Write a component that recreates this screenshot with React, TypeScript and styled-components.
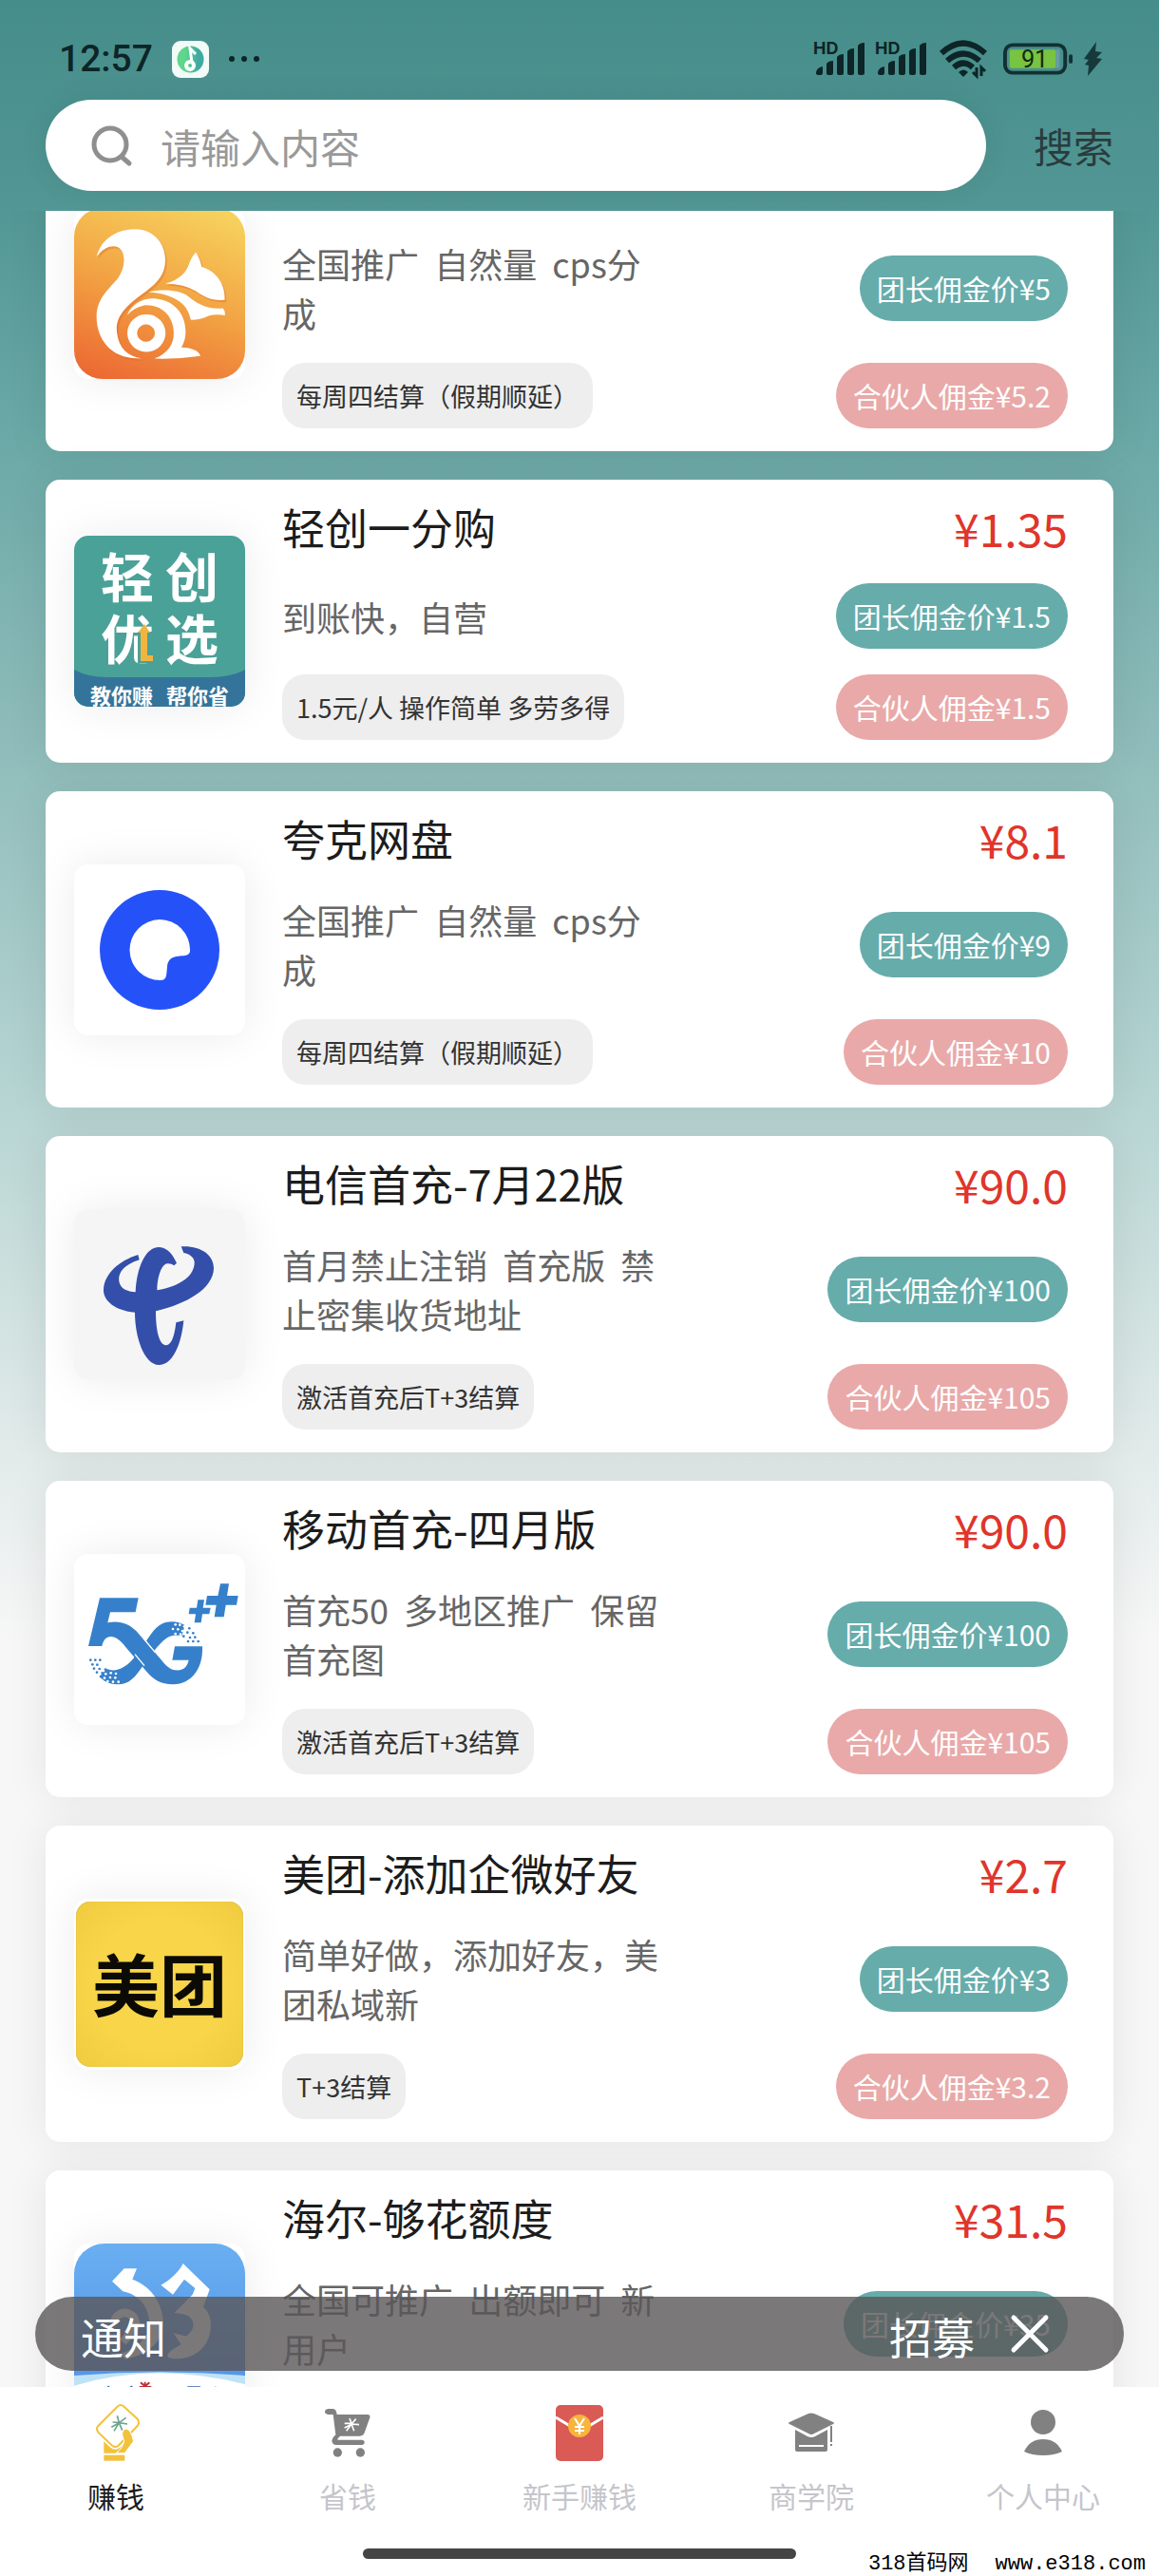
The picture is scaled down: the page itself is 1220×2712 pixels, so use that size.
import React, { useLayoutEffect, useRef, useState } from 'react';
import styled, { createGlobalStyle } from 'styled-components';

const sans = '"Noto Sans CJK SC", "Noto Sans", sans-serif';

const GlobalStyle = createGlobalStyle`
  *, *::before, *::after { box-sizing: border-box; }
  body { margin: 0; font-family: ${sans}; color: #1c1c1c; background: #f7f7f7; }
  button, input { font: inherit; color: inherit; border: 0; padding: 0; margin: 0; background: none; }
  h2, p, ul { margin: 0; padding: 0; font-weight: 400; }
  ul { list-style: none; }
  svg { display: block; flex: none; overflow: visible; }
`;

/* ---------- shell ---------- */

const Screen = styled.div`
  position: relative;
  display: flex;
  flex-direction: column;
  height: 100vh;
  background: linear-gradient(
    180deg,
    #458d8a 0,
    #519694 200px,
    #69a8a6 450px,
    #8dbbb9 765px,
    #b5d4d2 1150px,
    #e2ebea 1530px,
    #f7f7f7 1730px
  );
`;

const StatusBar = styled.div`
  display: flex;
  align-items: center;
  justify-content: space-between;
  height: 105px;
  padding: 19px 60px 0 62px;
  color: #0d2527;
`;

const StatusGroup = styled.div<{ $gap: number }>`
  display: flex;
  align-items: center;
  gap: ${(p) => p.$gap}px;
`;

const Clock = styled.span`
  font: 500 39px/48px Roboto, sans-serif;
`;

const SearchRow = styled.form`
  display: flex;
  align-items: center;
  gap: 50px;
  padding: 0 48px 21px;
`;

const SearchBox = styled.label`
  display: flex;
  align-items: center;
  gap: 30px;
  flex: 1;
  height: 96px;
  padding: 0 48px;
  border-radius: 48px;
  background: #fff;
  color: #8f8f8f;
  box-shadow: 0 0 30px rgba(0, 0, 0, 0.08);
`;

const SearchInput = styled.input`
  flex: 1;
  min-width: 0;
  height: 60px;
  font-size: 42px;
  outline: none;
  color: #333;
  &::placeholder { color: #999; opacity: 1; }
`;

const SearchButton = styled.button`
  font-size: 42px;
  line-height: 60px;
  color: #2b3c3c;
`;

/* ---------- offers ---------- */

const OfferList = styled.ul`
  display: flex;
  flex-direction: column;
  gap: 30px;
  flex: 1;
  min-height: 0;
  padding: 0 48px;
  overflow-y: auto;
  scrollbar-width: none;
`;

const Card = styled.li`
  display: flex;
  align-items: center;
  flex: none;
  gap: 39px;
  padding: 24px 48px 24px 30px;
  border-radius: 15px;
  background: #fff;
  box-shadow: 0 0 45px rgba(0, 0, 0, 0.08);
`;

const LogoTile = styled.div<{ $bg: string; $radius?: number }>`
  position: relative;
  flex: none;
  width: 180px;
  height: 180px;
  overflow: hidden;
  border-radius: ${(p) => p.$radius ?? 15}px;
  background: ${(p) => p.$bg};
`;

const LogoShadow = styled.div`
  flex: none;
  border-radius: 15px;
  box-shadow: 0 0 45px rgba(0, 0, 0, 0.08);
`;

const CardBody = styled.div`
  display: flex;
  flex-direction: column;
  gap: 27px;
  flex: 1;
  min-width: 0;
`;

const CardRow = styled.div`
  display: flex;
  align-items: center;
  justify-content: space-between;
  min-height: 69px;
`;

const HeadRow = styled.div`
  display: flex;
  align-items: flex-start;
  justify-content: space-between;
  height: 58px;
`;

const Title = styled.h2`
  font-size: 45px;
  line-height: 52px;
`;

const Price = styled.span`
  font-size: 48px;
  line-height: 52px;
  color: #e0352b;
`;

const Desc = styled.p`
  width: 400px;
  font-size: 36px;
  line-height: 52px;
  color: #666;
  white-space: pre-wrap;
`;

const Tag = styled.span`
  padding: 0 15px;
  border-radius: 24px;
  font-size: 27px;
  line-height: 69px;
  color: #333;
  background: #eee;
`;

const Pill = styled.span<{ $tone: 'leader' | 'partner' }>`
  padding: 0 18px;
  border-radius: 35px;
  font-size: 30px;
  line-height: 69px;
  color: #fff;
  white-space: nowrap;
  background: ${(p) => (p.$tone === 'leader' ? '#66acab' : '#e9a9a9')};
`;

const LogoGrid = styled.div`
  display: grid;
  grid-template-columns: 56px 56px;
  column-gap: 12px;
  row-gap: 8px;
  justify-content: center;
  padding-top: 12px;
  font-size: 56px;
  font-weight: 700;
  line-height: 57px;
  color: #fff;
`;

const ArchBack = styled.svg`
  position: absolute;
  inset: 0;
`;

const LogoStrap = styled.div`
  position: absolute;
  left: 0;
  right: 0;
  bottom: 0;
  display: flex;
  justify-content: center;
  gap: 14px;
  font-size: 22px;
  font-weight: 700;
  line-height: 26px;
  color: #fff;
`;

const MeituanMark = styled.div`
  margin: 3px 2px;
  height: 174px;
  border-radius: 15px;
  background: radial-gradient(circle, #f8d549 55%, #f0cb3f 100%);
  box-shadow: inset 0 0 1px #b0962f;
  text-align: center;
  font-size: 71px;
  font-weight: 700;
  line-height: 168px;
  color: #0b0a05;
`;

/* ---------- notice bar and tabs ---------- */

const Notice = styled.div`
  position: absolute;
  left: 37px;
  right: 37px;
  bottom: 216px;
  display: flex;
  align-items: center;
  height: 78px;
  padding: 0 79px 0 48px;
  border-radius: 39px;
  background: rgba(90, 86, 87, 0.8);
  color: #fff;
  font-size: 45px;
  line-height: 66px;
`;

const NoticeLabel = styled.span`
  padding-top: 6px;
`;

const NoticeAction = styled.a`
  margin-left: auto;
  padding-top: 6px;
  color: inherit;
  text-decoration: none;
`;

const CloseButton = styled.button`
  display: flex;
  margin-left: 38px;
`;

const TabBar = styled.nav`
  display: flex;
  flex: none;
  padding-top: 18px;
  background: #fff;
`;

const Tab = styled.button<{ $active: boolean }>`
  display: flex;
  flex-direction: column;
  align-items: center;
  gap: 14px;
  flex: 1;
  font-size: 30px;
  line-height: 44px;
  color: ${(p) => (p.$active ? '#1c1c1c' : '#c5c5cb')};
`;

const HomeArea = styled.div`
  display: flex;
  justify-content: center;
  padding: 34px 0 18px;
  background: #fff;
`;

const HomeBar = styled.div`
  width: 456px;
  height: 11px;
  border-radius: 6px;
  background: #454545;
`;

const SiteMark = styled.div`
  position: absolute;
  right: 14px;
  bottom: 0;
  display: flex;
  align-items: baseline;
  gap: 28px;
  font: 22px/24px "Liberation Mono", monospace;
  color: #000;
`;

const SiteMarkName = styled.span`
  font-family: "Liberation Mono", "Noto Sans CJK SC", monospace;
`;

/* ---------- status icons ---------- */

const SignalIcon = () => (
  <svg width="55" height="38" viewBox="0 0 55 38" fill="currentColor">
    <text x="0" y="14" fontSize="18" fontWeight="700" fontFamily="Inter, sans-serif">HD</text>
    <path d="M3 33q1-5 7-6v6q0 3-2 3H5q-2 0-2-2zM14 24q2-3 7-3v13q0 2-2 2h-3q-2 0-2-2zM25 17q2-3 7-3v20q0 2-2 2h-3q-2 0-2-2zM36 11q2-3 7-3v26q0 2-2 2h-3q-2 0-2-2zM47 5q2-3 7-3v32q0 2-2 2h-3q-2 0-2-2z" />
  </svg>
);

const WifiIcon = () => (
  <svg width="60" height="38" viewBox="0 0 60 38" fill="none" stroke="currentColor" strokeWidth="6">
    <path d="M5 13Q28-8 51 13M11 21Q28 6 45 21M18 28Q28 19 38 28" />
    <path d="M23 33q5-5 10 0l-5 5z" fill="currentColor" stroke="none" />
    <path d="M42 28v9l-4-4M47 37v-9l4 4" strokeWidth="3" />
  </svg>
);

const BatteryIcon = () => (
  <svg width="74" height="36" viewBox="0 0 76 36">
    <rect x="2" y="3" width="65" height="30" rx="8" fill="none" stroke="#123033" strokeWidth="4" />
    <rect x="7" y="8" width="50" height="20" rx="2" fill="#78c341" />
    <rect x="57" y="8" width="4" height="20" fill="#6a9aa5" />
    <rect x="71" y="13" width="4" height="10" rx="2" fill="#123033" />
    <text x="34" y="27" textAnchor="middle" fontSize="26" fontFamily="Roboto, sans-serif" fill="#12290f">91</text>
  </svg>
);

const BoltIcon = () => (
  <svg width="20" height="36" viewBox="0 0 20 36" fill="#17393b">
    <path d="M14 0L1 18l5 1-4 5 4 1-1 11 15-18-6-1 6-6-7-1z" />
  </svg>
);

const NoteAppIcon = () => (
  <svg width="39" height="39" viewBox="0 0 39 39">
    <defs>
      <linearGradient id="note" x1="0" x2="1">
        <stop offset="0.3" stopColor="#5ed68c" />
        <stop offset="0.8" stopColor="#3fa9a2" />
      </linearGradient>
    </defs>
    <rect width="39" height="39" rx="9" fill="#f2fbf8" />
    <circle cx="19.500" cy="19.500" r="14" fill="url(#note)" />
    <circle cx="19" cy="26" r="4" fill="none" stroke="#fff" strokeWidth="4" />
    <path d="M21 23L19 8l6 6" fill="none" stroke="#fff" strokeWidth="3" />
  </svg>
);

const DotsIcon = () => (
  <svg width="34" height="8" viewBox="0 0 34 8" fill="currentColor">
    <circle cx="4" cy="4" r="3" />
    <circle cx="17" cy="4" r="3" />
    <circle cx="30" cy="4" r="3" />
  </svg>
);

const MagnifierIcon = () => (
  <svg width="43" height="43" viewBox="0 0 43 43" fill="none" stroke="currentColor" strokeWidth="5" strokeLinecap="round">
    <circle cx="20" cy="20" r="17" />
    <path d="M32 33l8 7" />
  </svg>
);

const CrossIcon = () => (
  <svg width="40" height="40" viewBox="0 0 40 40" stroke="currentColor" strokeWidth="5" strokeLinecap="round">
    <path d="M3 3l34 34M37 3L3 37" />
  </svg>
);

/* ---------- offer logos ---------- */

const SquirrelLogo = () => (
  <LogoTile $bg="linear-gradient(200deg, #f7d25d 5%, #f2a444 50%, #ec6632 98%)" $radius={30}>
    <svg width="180" height="180" viewBox="0 0 180 180">
      <g transform="scale(0.4464 0.3954) translate(-175 -47)" fill="#fff">
        <g fill="#d9652a" opacity="0.35" transform="translate(4 6)">
          <path d="M228 176C240 125 280 103 318 103C362 103 390 140 390 186C390 222 372 246 345 268C290 312 272 340 276 378C280 420 302 442 334 447C262 452 228 396 228 336C228 292 252 268 274 240C302 204 300 138 258 150Q242 156 228 176z" />
          <path d="M390 248C424 238 440 218 446 196Q452 176 462 165Q470 176 476 204C512 216 532 252 530 292C496 294 482 282 462 268Q436 250 390 248z" />
        </g>
        <path d="M228 176C240 125 280 103 318 103C362 103 390 140 390 186C390 222 372 246 345 268C290 312 272 340 276 378C280 420 302 442 334 447C262 452 228 396 228 336C228 292 252 268 274 240C302 204 300 138 258 150Q242 156 228 176z" />
        <path d="M390 248C424 238 440 218 446 196Q452 176 462 165Q470 176 476 204C512 216 532 252 530 292C496 294 482 282 462 268Q436 250 390 248z" />
        <path d="M350 270C390 262 424 266 444 282C464 300 488 318 526 314Q532 322 531 333Q510 328 492 334Q470 346 450 345C444 306 420 278 350 270z" />
        <path d="M300 332C312 300 340 286 364 288C412 292 438 330 438 376Q438 400 428 418Q468 420 473 441Q420 450 364 448C396 434 410 410 410 380C410 330 376 302 340 306Q316 312 300 332z" />
        <path fillRule="evenodd" d="M345 330a45 50 0 1 0 1 0zM345 357a21 23 0 1 1-1 0z" />
      </g>
    </svg>
  </LogoTile>
);

const QingchuangLogo = () => (
  <LogoTile $bg="#4aa198">
    <ArchBack width="180" height="180" viewBox="0 0 180 180">
      <path d="M0 141Q14 149 36 149H144Q166 149 180 141V180H0z" fill="#35749a" />
    </ArchBack>
    <LogoGrid>
      <span>轻</span>
      <span>创</span>
      <span>优</span>
      <span>选</span>
    </LogoGrid>
    <ArchBack width="180" height="180" viewBox="0 0 180 180">
      <path d="M67 101h17v33H67z" fill="#4aa198" />
      <path d="M74 93l6 9h-3v24h6v6H70v-30h-3z" fill="#f0b541" />
    </ArchBack>
    <LogoStrap>
      <span>教你赚</span>
      <span>帮你省</span>
    </LogoStrap>
  </LogoTile>
);

const QuarkLogo = () => (
  <LogoTile $bg="#fff">
    <svg width="180" height="180" viewBox="0 0 180 180">
      <circle cx="90" cy="90" r="63" fill="#2552f8" />
      <path d="M90 58A32 32 0 0 1 122 91Q122 95 117 96C106 97 99 97 98 108C97 116 98 122 91 122A32 32 0 0 1 90 58z" fill="#fff" />
    </svg>
  </LogoTile>
);

const TelecomLogo = () => (
  <LogoTile $bg="#f5f5f6">
    <svg width="180" height="180" viewBox="54 98 540 540" fill="#334faa">
      <path d="M256 242L260 258C212 274 192 298 196 326C200 350 222 358 248 360C252 280 280 218 322 218C352 220 366 244 378 268L370 276C362 270 352 268 343 271C326 280 316 320 316 354C390 342 436 308 434 264C432 250 420 240 400 236L392 216C450 212 496 240 495 286C492 350 410 396 312 420C312 480 322 526 344 528C364 528 372 490 376 456L400 450C392 530 364 590 322 590C274 588 246 500 246 424C184 418 146 388 147 352C150 300 198 260 256 242z" />
    </svg>
  </LogoTile>
);

const fiveGDots = [
  [106, 412], [121, 412], [136, 412], [112, 426], [127, 427], [117, 439], [134, 440], [153, 442], [126, 451],
  [143, 453], [138, 464], [362, 300], [418, 312], [430, 327], [412, 325], [436, 340], [420, 341], [446, 353],
  [430, 353], [414, 353], [400, 337],
];
const fiveGHoles = [
  [374, 300], [388, 301], [402, 306], [366, 314], [382, 315], [396, 320], [374, 329], [390, 331],
  [154, 456], [170, 453], [186, 455], [150, 469], [168, 467], [184, 468], [160, 479], [177, 481], [194, 481],
];

const FiveGLogo = () => (
  <LogoTile $bg="#fff">
    <svg width="180" height="180" viewBox="54 77 540 540" fill="#3680cb">
      <path d="M135 216H257L248 261H168L160 294C196 286 226 296 250 320L330 412C350 438 364 446 388 444Q410 440 416 412H364L372 369H459C462 440 424 488 368 489C330 490 304 474 284 450L216 370C196 344 178 334 160 340Q146 346 142 368H99z" />
      <path d="M250 396L274 426C246 470 226 490 190 489C168 488 148 480 134 464L158 440C178 450 214 446 250 396z" />
      <path d="M282 352C304 320 320 292 362 291Q386 292 404 302L394 336C362 328 344 336 306 384z" />
      <path d="M516 171h27l-6 38h35l-5 29h-34l-6 38h-30l6-38h-34l5-29h34zM445 222h20l-4 25h24l-4 20h-22l-4 27h-21l4-27h-22l3-20h22z" />
      {fiveGDots.map(([x, y]) => <circle key={`${x}-${y}`} cx={x} cy={y} r="4" />)}
      {fiveGHoles.map(([x, y]) => <circle key={`${x}-${y}`} cx={x} cy={y} r="4" fill="#fff" />)}
      <path d="M272 342L310 388M246 394L276 430" stroke="#fff" strokeWidth="4" />
    </svg>
  </LogoTile>
);

const MeituanLogo = () => (
  <LogoTile $bg="#fff">
    <MeituanMark>美团</MeituanMark>
  </LogoTile>
);

const HaierLogo = () => (
  <LogoTile $bg="linear-gradient(180deg, #6aaff1, #5597e8 70%)" $radius={32}>
    <svg width="180" height="180" viewBox="54 35 540 540">
      <path d="M54 452Q324 430 594 452V575H54z" fill="#bfe2f6" />
      <path d="M54 484Q180 446 324 444Q470 446 594 480V575H54z" fill="#fff" />
      <g fill="#fff">
        <path d="M174 154L212 114H252L238 148C290 166 332 216 336 282C336 340 296 384 216 400L200 384C262 362 292 326 292 282C286 226 254 196 208 186z" />
        <path d="M328 166C358 150 384 126 398 98L482 180L462 236C496 262 492 330 460 364C436 390 400 402 362 398C336 394 352 374 392 354L368 318L408 328C440 306 440 268 398 258L370 254L428 196L436 176L402 148L366 196z" />
      </g>
      <path d="M180 286a34 34 0 1 1 58 26l-30 34" fill="none" stroke="#fff" strokeWidth="26" />
      <path d="M160 486l18 14M228 492l10-6M344 491h48M412 489h38v10M462 491h22l6 10M500 487v12" fill="none" stroke="#3c5fae" strokeWidth="6" />
      <path d="M264 474l14 12 14-12M260 488h38M278 472v24" fill="none" stroke="#c02f38" strokeWidth="6" />
    </svg>
  </LogoTile>
);

/* ---------- tab icons ---------- */

const HandCardIcon = () => (
  <svg width="60" height="60" viewBox="96 543 180 180" fill="none">
    <path d="M148 650V698H214V690L240 660L230 626L192 680z" fill="#f2c23b" />
    <path d="M148 704H214V722H148z" fill="#f2c23b" />
    <path d="M192 550Q201 542 210 550L254 590Q262 602 254 612L194 674Q184 682 174 674L130 632Q122 620 130 612z" fill="#fff" stroke="#fff" strokeWidth="16" />
    <path d="M192 550Q201 542 210 550L254 590Q262 602 254 612L194 674Q184 682 174 674L130 632Q122 620 130 612z" stroke="#f2c23b" strokeWidth="6" />
    <path d="M206 640Q206 620 222 622Q232 624 242 660L214 698H186Q208 682 212 660z" fill="#f2c23b" stroke="#fff" strokeWidth="3" />
    <path d="M190 580L196 602L176 600M196 602L180 628M196 602L206 626M218 586L196 602L222 606M172 616L194 604" stroke="#6da58c" strokeWidth="5" />
  </svg>
);

const CartIcon = () => (
  <svg width="60" height="60" viewBox="828 543 180 180" fill="#818181">
    <path d="M856 558H872Q882 558 884 576H980Q990 576 988 586L970 636Q966 644 956 644H894Q886 650 886 656H962Q971 656 971 664T962 672H880Q868 670 868 658Q870 648 880 640L872 576H856Q846 574 846 567T856 558z" />
    <circle cx="886" cy="696" r="14" />
    <circle cx="958" cy="696" r="14" />
    <path d="M924 588L930 604L908 604M930 606L914 628M930 606L938 628M944 590L930 606L954 608M908 618L928 608" fill="none" stroke="#fff" strokeWidth="5" />
  </svg>
);

const EnvelopeIcon = () => (
  <svg width="60" height="60" viewBox="0 0 60 60">
    <rect x="5" y="1" width="50" height="59" rx="5" fill="#da5a55" />
    <path d="M5 14L30 29L55 14" fill="none" stroke="#fff" strokeWidth="3" />
    <circle cx="30" cy="23" r="12" fill="#f6b53c" />
    <path d="M25 15l5 8 5-8M30 23v9M25 24h10M25 28h10" fill="none" stroke="#fff" strokeWidth="2" />
  </svg>
);

const CapIcon = () => (
  <svg width="60" height="60" viewBox="0 0 60 60" fill="#818181">
    <path d="M27 10Q30 9 33 10L53 19Q55 20 53 21L33 31Q30 33 27 31L7 21Q5 20 7 19z" />
    <path d="M13 27L26 34Q30 36 34 34L47 27V48Q47 50 45 50H15Q13 50 13 48z" />
    <path d="M17 44H43" stroke="#fff" strokeWidth="2" />
    <path d="M51 23V40M51 42v2" stroke="#818181" strokeWidth="2" />
  </svg>
);

const PersonIcon = () => (
  <svg width="60" height="60" viewBox="0 0 60 60" fill="#818181">
    <circle cx="30" cy="19" r="13" />
    <path d="M10 50Q16 37 30 37T50 50Q42 54 30 54T10 50z" />
  </svg>
);

/* ---------- data ---------- */

interface Offer {
  id: string;
  Logo: React.FC;
  title?: string;
  price?: string;
  desc: string;
  tag?: string;
  leader: string;
  partner?: string;
}

const offers: Offer[] = [
  { id: 'uc', Logo: SquirrelLogo, desc: '全国推广  自然量  cps分成', tag: '每周四结算（假期顺延）', leader: '5', partner: '5.2' },
  { id: 'qc', Logo: QingchuangLogo, title: '轻创一分购', price: '1.35', desc: '到账快，自营', tag: '1.5元/人 操作简单 多劳多得', leader: '1.5', partner: '1.5' },
  { id: 'quark', Logo: QuarkLogo, title: '夸克网盘', price: '8.1', desc: '全国推广  自然量  cps分成', tag: '每周四结算（假期顺延）', leader: '9', partner: '10' },
  { id: 'telecom', Logo: TelecomLogo, title: '电信首充-7月22版', price: '90.0', desc: '首月禁止注销  首充版  禁止密集收货地址', tag: '激活首充后T+3结算', leader: '100', partner: '105' },
  { id: 'mobile', Logo: FiveGLogo, title: '移动首充-四月版', price: '90.0', desc: '首充50  多地区推广  保留首充图', tag: '激活首充后T+3结算', leader: '100', partner: '105' },
  { id: 'meituan', Logo: MeituanLogo, title: '美团-添加企微好友', price: '2.7', desc: '简单好做，添加好友，美团私域新', tag: 'T+3结算', leader: '3', partner: '3.2' },
  { id: 'haier', Logo: HaierLogo, title: '海尔-够花额度', price: '31.5', desc: '全国可推广  出额即可  新用户', leader: '35' },
];

const tabs = [
  { label: '赚钱', Icon: HandCardIcon },
  { label: '省钱', Icon: CartIcon },
  { label: '新手赚钱', Icon: EnvelopeIcon },
  { label: '商学院', Icon: CapIcon },
  { label: '个人中心', Icon: PersonIcon },
];

const OfferCard = ({ offer }: { offer: Offer }) => (
  <Card>
    <LogoShadow>
      <offer.Logo />
    </LogoShadow>
    <CardBody>
      <HeadRow>
        {offer.title && <Title>{offer.title}</Title>}
        {offer.price && <Price>¥{offer.price}</Price>}
      </HeadRow>
      <CardRow>
        <Desc>{offer.desc}</Desc>
        <Pill $tone="leader">团长佣金价¥{offer.leader}</Pill>
      </CardRow>
      <CardRow>
        {offer.tag && <Tag>{offer.tag}</Tag>}
        {offer.partner && <Pill $tone="partner">合伙人佣金¥{offer.partner}</Pill>}
      </CardRow>
    </CardBody>
  </Card>
);

export default function App() {
  const listRef = useRef<HTMLUListElement>(null);
  const [active, setActive] = useState('赚钱');
  const [noticeOpen, setNoticeOpen] = useState(true);

  useLayoutEffect(() => {
    if (listRef.current) listRef.current.scrollTop = 80;
  }, []);

  return (
    <Screen>
      <GlobalStyle />
      <StatusBar>
        <StatusGroup $gap={20}>
          <Clock>12:57</Clock>
          <NoteAppIcon />
          <DotsIcon />
        </StatusGroup>
        <StatusGroup $gap={10}>
          <SignalIcon />
          <SignalIcon />
          <WifiIcon />
          <BatteryIcon />
          <BoltIcon />
        </StatusGroup>
      </StatusBar>

      <SearchRow onSubmit={(e) => e.preventDefault()}>
        <SearchBox>
          <MagnifierIcon />
          <SearchInput type="text" placeholder="请输入内容" />
        </SearchBox>
        <SearchButton type="submit">搜索</SearchButton>
      </SearchRow>

      <OfferList ref={listRef}>
        {offers.map((offer) => <OfferCard key={offer.id} offer={offer} />)}
      </OfferList>

      <TabBar>
        {tabs.map(({ label, Icon }) => (
          <Tab key={label} type="button" $active={label === active} onClick={() => setActive(label)}>
            <Icon />
            {label}
          </Tab>
        ))}
      </TabBar>
      <HomeArea>
        <HomeBar />
      </HomeArea>

      {noticeOpen && (
        <Notice>
          <NoticeLabel>通知</NoticeLabel>
          <NoticeAction href="#recruit">招募</NoticeAction>
          <CloseButton type="button" aria-label="关闭" onClick={() => setNoticeOpen(false)}>
            <CrossIcon />
          </CloseButton>
        </Notice>
      )}

      <SiteMark>
        <SiteMarkName>318首码网</SiteMarkName>
        <span>www.e318.com</span>
      </SiteMark>
    </Screen>
  );
}
